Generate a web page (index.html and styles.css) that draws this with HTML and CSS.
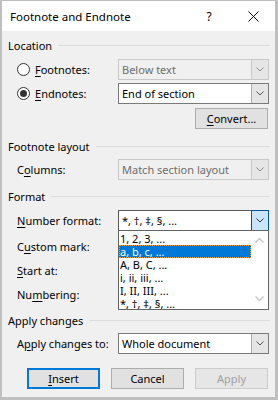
FILE: index.html
```html
<!DOCTYPE html>
<html lang="en">
<head>
  <meta charset="UTF-8" />
  <title>Footnote and Endnote</title>
  <meta name="viewport" content="width=device-width, initial-scale=1" />
  <link rel="stylesheet" href="styles.css">
</head>
<body>
  <div class="dialog">
    <div class="titlebar">
      <div class="title">Footnote and Endnote</div>
      <div class="tb-btn">?</div>
      <div class="tb-btn">
        <svg width="11" height="11" viewBox="0 0 11 11"><path d="M0.5 0.5 L10.5 10.5 M10.5 0.5 L0.5 10.5" stroke="#000" stroke-width="1" fill="none"/></svg>
      </div>
    </div>

    <div class="content">
      <div class="legend">Location</div>

      <div class="row row-first">
        <div class="label"><span class="radio"></span><u>F</u>ootnotes:</div>
        <div class="select disabled">
          <span class="value">Below text</span>
          <span class="arrow"><svg width="8" height="5" viewBox="0 0 8 5"><path d="M0.5 0.5 L4 4 L7.5 0.5" stroke="#888" fill="none"/></svg></span>
        </div>
      </div>

      <div class="row">
        <div class="label"><span class="radio checked"></span><u>E</u>ndnotes:</div>
        <div class="select">
          <span class="value">End of section</span>
          <span class="arrow"><svg width="8" height="5" viewBox="0 0 8 5"><path d="M0.5 0.5 L4 4 L7.5 0.5" stroke="#555" fill="none"/></svg></span>
        </div>
      </div>

      <div class="row row-convert">
        <button class="button"><u>C</u>onvert...</button>
      </div>

      <div class="legend legend-layout">Footnote layout</div>

      <div class="row row-columns">
        <div class="label">C<u>o</u>lumns:</div>
        <div class="select disabled">
          <span class="value">Match section layout</span>
          <span class="arrow"><svg width="8" height="5" viewBox="0 0 8 5"><path d="M0.5 0.5 L4 4 L7.5 0.5" stroke="#888" fill="none"/></svg></span>
        </div>
      </div>

      <div class="legend legend-format">Format</div>

      <div class="row row-number">
        <div class="label"><u>N</u>umber format:</div>
        <div class="select open">
          <span class="value">*, †, ‡, §, ...</span>
          <span class="arrow"><svg width="8" height="5" viewBox="0 0 8 5"><path d="M0.5 0.5 L4 4 L7.5 0.5" stroke="#333" fill="none"/></svg></span>
          <div class="dropdown">
            <div class="options">
              <div class="option">1, 2, 3, ...</div>
              <div class="option selected">a, b, c, ...</div>
              <div class="option">A, B, C, ...</div>
              <div class="option">i, ii, iii, ...</div>
              <div class="option">I, II, III, ...</div>
              <div class="option">*, †, ‡, §, ...</div>
            </div>
            <div class="scrollbar">
              <svg width="9" height="5" viewBox="0 0 9 5"><path d="M0.5 4.5 L4.5 0.5 L8.5 4.5" stroke="#c8c8c8" stroke-width="1.5" fill="none"/></svg>
              <svg width="9" height="5" viewBox="0 0 9 5"><path d="M0.5 0.5 L4.5 4.5 L8.5 0.5" stroke="#c8c8c8" stroke-width="1.5" fill="none"/></svg>
            </div>
          </div>
        </div>
      </div>

      <div class="row row-custom">
        <div class="label">C<u>u</u>stom mark:</div>
      </div>
      <div class="row">
        <div class="label"><u>S</u>tart at:</div>
      </div>
      <div class="row">
        <div class="label">Nu<u>m</u>bering:</div>
      </div>

      <div class="legend legend-apply">Apply changes</div>

      <div class="row row-apply">
        <div class="label">A<u>p</u>ply changes to:</div>
        <div class="select">
          <span class="value">Whole document</span>
          <span class="arrow"><svg width="8" height="5" viewBox="0 0 8 5"><path d="M0.5 0.5 L4 4 L7.5 0.5" stroke="#555" fill="none"/></svg></span>
        </div>
      </div>

      <div class="buttons">
        <button class="button default"><u>I</u>nsert</button>
        <button class="button">Cancel</button>
        <button class="button" disabled>Apply</button>
      </div>
    </div>
  </div>
</body>
</html>
```

FILE: styles.css
```css
* {
  box-sizing: border-box;
}

body {
  margin: 0;
  font-family: "Segoe UI", "Noto Sans", sans-serif;
  font-size: 11px;
  color: #000;
  background: #bfbfbf;
}

.dialog {
  width: 278px;
  height: 400px;
  border-style: solid;
  border-color: #bfbfbf;
  border-width: 1px 3px 3px 2px;
  background: #f0f0f0;
}

.titlebar {
  height: 30px;
  background: #fff;
  display: flex;
  align-items: center;
  padding-left: 8px;
}

.title {
  flex: 1;
  font-size: 11.5px;
}

.tb-btn {
  width: 44px;
  height: 30px;
  display: flex;
  align-items: center;
  justify-content: center;
  font-size: 12px;
}

.content {
  padding: 6px 6px 0 6px;
}

.legend {
  display: flex;
  align-items: center;
  height: 16px;
}

.legend::after {
  content: "";
  flex: 1;
  height: 1px;
  background: #dcdcdc;
  margin-left: 6px;
  margin-right: -1px;
}

.legend-layout { margin-top: 9px; }
.legend-format { margin-top: 8px; }
.legend-apply { margin-top: 7px; }

.row {
  display: flex;
  align-items: center;
  height: 21px;
  margin-top: 3px;
}

.row-first { margin-top: 6px; }
.row-convert { margin-top: 4px; justify-content: flex-end; padding-right: 1px; }
.row-columns { margin-top: 5px; }
.row-number { margin-top: 6px; }
.row-custom { margin-top: 5px; }
.row-apply { margin-top: 5px; }

.label {
  width: 110px;
  padding-left: 9px;
  display: flex;
  align-items: center;
  white-space: nowrap;
}

u {
  text-underline-offset: 2px;
}

.radio {
  width: 13px;
  height: 13px;
  border: 1px solid #333;
  border-radius: 50%;
  background: #fff;
  margin-right: 5px;
  display: flex;
  align-items: center;
  justify-content: center;
}

.radio.checked::after {
  content: "";
  width: 7px;
  height: 7px;
  border-radius: 50%;
  background: #333;
}

.select {
  position: relative;
  flex: 1;
  height: 21px;
  display: flex;
  align-items: stretch;
  background: #fff;
  border: 1px solid #7a7a7a;
}

.select .value {
  flex: 1;
  padding-left: 3px;
  display: flex;
  align-items: center;
}

.select .arrow {
  width: 17px;
  display: flex;
  align-items: center;
  justify-content: center;
  background: #e5e5e5;
  border-left: 1px solid #adadad;
}

.select.disabled {
  background: #f0f0f0;
  border-color: #c8c8c8;
  color: #6d6d6d;
}

.select.disabled .arrow {
  background: #e6e6e6;
  border-left-color: #c8c8c8;
}

.select.open {
  border-color: #5a5a5a;
}

.select.open .arrow {
  background: #cce4f7;
  border: 1px solid #005499;
  margin: -1px -1px -1px 0;
  width: 18px;
}

.dropdown {
  position: absolute;
  top: 19px;
  left: -1px;
  right: -1px;
  height: 80px;
  background: #fff;
  border: 1px solid #646464;
  display: flex;
  overflow: hidden;
  z-index: 2;
}

.options {
  flex: 1;
  padding-top: 1px;
}

.option {
  height: 13px;
  line-height: 13px;
  padding-left: 1px;
  white-space: nowrap;
}

.option.selected {
  background: #0078d7;
  color: #fff;
  outline: 1px dotted #e8a040;
  outline-offset: -1px;
}

.scrollbar {
  width: 17px;
  display: flex;
  flex-direction: column;
  align-items: center;
  justify-content: space-between;
  padding: 7px 0 8px;
  background: #fff;
}

.buttons {
  display: flex;
  justify-content: flex-end;
  gap: 11px;
  margin-top: 14px;
  padding-right: 1px;
}

.button {
  width: 73px;
  height: 21px;
  padding: 0;
  font-family: inherit;
  font-size: 11px;
  color: #000;
  background: #e1e1e1;
  border: 1px solid #adadad;
}

.button.default {
  border: 2px solid #0078d7;
}

.button:disabled {
  color: #a0a0a0;
  background: #e6e6e6;
  border-color: #cccccc;
}
```
